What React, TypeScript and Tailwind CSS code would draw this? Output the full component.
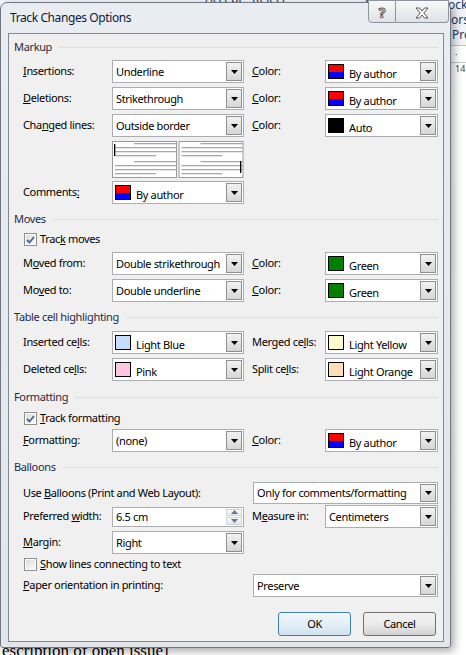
import React from 'react'

type SwatchKind = 'author' | 'black' | 'green' | 'lightblue' | 'pink' | 'lightyellow' | 'lightorange'

function Swatch({ kind }: { kind: SwatchKind }) {
  return (
    <div className="ml-[2px] mt-[3px] w-[16px] h-[15px] shrink-0 border border-black flex flex-col">
      {kind === 'author' && (
        <>
          <div className="flex-1 bg-[#ff0000]" />
          <div className="flex-1 bg-[#0000ff]" />
        </>
      )}
      {kind === 'black' && <div className="flex-1 bg-black" />}
      {kind === 'green' && <div className="flex-1 bg-[#008000]" />}
      {kind === 'lightblue' && <div className="flex-1 bg-[#c4defb]" />}
      {kind === 'pink' && <div className="flex-1 bg-[#ffc4e2]" />}
      {kind === 'lightyellow' && <div className="flex-1 bg-[#f9f9cc]" />}
      {kind === 'lightorange' && <div className="flex-1 bg-[#ffdcb8]" />}
    </div>
  )
}

function Arrow() {
  return (
    <div className="w-[16px] shrink-0 my-[1px] mr-[1px] flex items-center justify-center border border-[#8e8f8f] bg-gradient-to-b from-[#f2f2f2] to-[#d6d6d6]">
      <svg width="7" height="4" viewBox="0 0 7 4">
        <path d="M0 0h7L3.5 4z" fill="#000" />
      </svg>
    </div>
  )
}

function Combo({ className, text, swatch }: { className: string; text: string; swatch?: SwatchKind }) {
  return (
    <div className={`flex bg-white border border-[#abadb3] ${className}`}>
      {swatch ? (
        <div className="flex flex-1 items-start min-w-0">
          <Swatch kind={swatch} />
          <span className="ml-[5px] mt-[6px] leading-[14px] whitespace-nowrap">{text}</span>
        </div>
      ) : (
        <span className="flex-1 self-center pl-[3px] leading-[16px] whitespace-nowrap">{text}</span>
      )}
      <Arrow />
    </div>
  )
}

function Spinner() {
  return (
    <div className="flex h-[20px] w-[132px] bg-white border border-[#abadb3]">
      <span className="flex-1 self-center pl-[3px] leading-[16px]">6.5 cm</span>
      <div className="w-[16px] flex flex-col my-[1px] mr-[1px] gap-px">
        <div className="flex-1 flex items-center justify-center bg-gradient-to-b from-[#f6f7f9] to-[#e4e7ec] border border-[#d0d4da]">
          <svg width="7" height="4" viewBox="0 0 7 4">
            <path d="M0 4h7L3.5 0z" fill="#6a7690" />
          </svg>
        </div>
        <div className="flex-1 flex items-center justify-center bg-gradient-to-b from-[#f6f7f9] to-[#e4e7ec] border border-[#d0d4da]">
          <svg width="7" height="4" viewBox="0 0 7 4">
            <path d="M0 0h7L3.5 4z" fill="#6a7690" />
          </svg>
        </div>
      </div>
    </div>
  )
}

function Section({ title, className }: { title: string; className: string }) {
  return (
    <div className={`flex items-center h-[16px] pl-[5px] pr-[5px] ${className}`}>
      <span className="leading-[16px] text-[#1e2b45]">{title}</span>
      <div className="flex-1 h-px bg-[#d5dfe5] ml-[7px]" />
    </div>
  )
}

function Check({ checked }: { checked: boolean }) {
  return (
    <div className="w-[13px] h-[13px] shrink-0 border border-[#8e8f8f] bg-white p-px">
      <div className="w-full h-full bg-gradient-to-br from-[#dcdcdc] to-[#fbfbfb] flex items-center justify-center">
        {checked && (
          <svg width="9" height="8" viewBox="0 0 9 8">
            <path d="M1 4l2.5 2.5L8 1" stroke="#4a5f97" strokeWidth="1.8" fill="none" />
          </svg>
        )}
      </div>
    </div>
  )
}

function Preview() {
  const pane = (ox: number) => (
    <g>
      <rect x={ox + 0.5} y="0.5" width="64" height="36" fill="#fff" stroke="#9a9a9a" />
      {[2, 20].map(y => (
        <g key={y}>
          <rect x={ox + 22} y={y} width="42" height="1.3" fill="#a8a8a8" />
          <rect x={ox + 3} y={y + 4} width="61" height="1.3" fill="#a8a8a8" />
          <rect x={ox + 3} y={y + 8} width="61" height="1.3" fill="#a8a8a8" />
          <rect x={ox + 3} y={y + 12} width="41" height="1.3" fill="#a8a8a8" />
        </g>
      ))}
    </g>
  )
  return (
    <svg width="132" height="37" viewBox="0 0 132 37" className="block">
      {pane(0)}
      {pane(66.5)}
      <rect x="2" y="3" width="1.3" height="12" fill="#000" />
      <rect x="128" y="20" width="1.3" height="12" fill="#000" />
    </svg>
  )
}

function Label({ children }: { children: React.ReactNode }) {
  return <span className="w-[89px] shrink-0 whitespace-nowrap">{children}</span>
}

function RightLabel({ children }: { children: React.ReactNode }) {
  return <span className="ml-[8px] w-[73px] shrink-0 whitespace-nowrap">{children}</span>
}

function Btn({ children, primary }: { children: React.ReactNode; primary?: boolean }) {
  return (
    <div
      className={`w-[73px] h-[24px] rounded-[3px] border flex items-center justify-center ${
        primary
          ? 'border-[#3c7fb1] bg-gradient-to-b from-[#f1f7fb] via-[#e4eff7] to-[#cfe2ef]'
          : 'border-[#707070] bg-gradient-to-b from-[#f2f2f2] via-[#ebebeb] to-[#d2d2d2]'
      }`}
    >
      {children}
    </div>
  )
}

export default function App() {
  return (
    <div className="relative w-[466px] h-[655px] overflow-hidden bg-white font-['Noto_Sans',sans-serif]">
      {/* Word window behind */}
      <div className="absolute left-0 top-0 w-full h-[46px] bg-[#f1f4f8] border-b border-[#b9c6d6] text-[12px] leading-[14px] text-[#1e395b]">
        <span className="absolute left-[205px] top-[-8px]">Accept</span>
        <span className="absolute left-[252px] top-[-8px]">Reject</span>
        <span className="absolute left-[365px] top-[-8px]">Compare</span>
        <span className="absolute left-[437px] top-[-2px]">Block</span>
        <span className="absolute left-[451px] top-[13px]">ors</span>
        <span className="absolute left-[452px] top-[28px]">Pro</span>
      </div>
      <div className="absolute left-0 top-[47px] w-full h-[16px] bg-white border-b border-[#c8c8c8] text-[9px] text-[#444]">
        <span className="absolute left-[455px] top-[1px]">· 14</span>
      </div>
      <div className="absolute left-[2px] top-[642px] text-[17px] leading-[17px] font-['Liberation_Serif',serif] text-black">
        escription of open issue]
      </div>

      {/* Dialog */}
      <div className="absolute left-0 top-[2px] w-[451px] h-[646px] flex flex-col rounded-t-[7px] rounded-b-[3px] border border-[#707680] bg-gradient-to-b from-[#e9edf2] to-[#e2e6ea] shadow-[3px_3px_8px_rgba(0,0,0,0.35)] text-[11px] tracking-[-0.35px] text-black">
        <div className="h-[30px] flex items-start shrink-0">
          <span className="pl-[9px] pt-[7px] text-[12px] leading-[16px] tracking-[-0.4px] text-[#0e1a3a]">Track Changes Options</span>
          <div className="ml-auto mr-[1px] mt-[-3px] flex">
            <div className="w-[28px] h-[23px] rounded-bl-[4px] border border-[#8d939b] bg-gradient-to-b from-[#f7f8f9] to-[#dfe2e6] flex items-center justify-center pt-[2px] text-[14px] font-bold leading-none text-white [-webkit-text-stroke:1px_#555]">
              ?
            </div>
            <div className="w-[53px] h-[23px] rounded-br-[4px] border border-l-0 border-[#8d939b] bg-gradient-to-b from-[#f7f8f9] to-[#dfe2e6] flex items-center justify-center pt-[2px]">
              <svg width="14" height="12" viewBox="0 0 14 12">
                <path
                  d="M1 1h3.5L7 4l2.5-3H13L8.8 6 13 11H9.5L7 8l-2.5 3H1l4.2-5z"
                  fill="#fff"
                  stroke="#555"
                  strokeWidth="1"
                  strokeLinejoin="round"
                />
              </svg>
            </div>
          </div>
        </div>

        <div className="ml-[7px] mr-[6px] mb-[5px] flex-1 flex flex-col border border-[#7f8a95] bg-[#f0f0f0]">
          <Section title="Markup" className="mt-[5px]" />
          <div className="mt-[5px] flex items-center h-[23px] pl-[14px] pr-[5px]">
            <Label><u>I</u>nsertions:</Label>
            <Combo className="w-[132px] h-[23px]" text="Underline" />
            <RightLabel><u>C</u>olor:</RightLabel>
            <Combo className="w-[113px] h-[23px]" text="By author" swatch="author" />
          </div>
          <div className="mt-[4px] flex items-center h-[23px] pl-[14px] pr-[5px]">
            <Label><u>D</u>eletions:</Label>
            <Combo className="w-[132px] h-[23px]" text="Strikethrough" />
            <RightLabel><u>C</u>olor:</RightLabel>
            <Combo className="w-[113px] h-[23px]" text="By author" swatch="author" />
          </div>
          <div className="mt-[4px] flex items-center h-[23px] pl-[14px] pr-[5px]">
            <Label>Cha<u>n</u>ged lines:</Label>
            <Combo className="w-[132px] h-[23px]" text="Outside border" />
            <RightLabel><u>C</u>olor:</RightLabel>
            <Combo className="w-[113px] h-[23px]" text="Auto" swatch="black" />
          </div>
          <div className="mt-[4px] flex pl-[103px]">
            <Preview />
          </div>
          <div className="mt-[3px] flex items-center h-[23px] pl-[14px] pr-[5px]">
            <Label>Comments<u>:</u></Label>
            <Combo className="w-[132px] h-[23px]" text="By author" swatch="author" />
          </div>

          <Section title="Moves" className="mt-[7px]" />
          <div className="mt-[5px] flex items-center h-[15px] pl-[15px] gap-[3px]">
            <Check checked />
            <span>Trac<u>k</u> moves</span>
          </div>
          <div className="mt-[5px] flex items-center h-[23px] pl-[14px] pr-[5px]">
            <Label>M<u>o</u>ved from:</Label>
            <Combo className="w-[132px] h-[23px]" text="Double strikethrough" />
            <RightLabel><u>C</u>olor:</RightLabel>
            <Combo className="w-[113px] h-[23px]" text="Green" swatch="green" />
          </div>
          <div className="mt-[4px] flex items-center h-[23px] pl-[14px] pr-[5px]">
            <Label>Mo<u>v</u>ed to:</Label>
            <Combo className="w-[132px] h-[23px]" text="Double underline" />
            <RightLabel><u>C</u>olor:</RightLabel>
            <Combo className="w-[113px] h-[23px]" text="Green" swatch="green" />
          </div>

          <Section title="Table cell highlighting" className="mt-[7px]" />
          <div className="mt-[6px] flex items-center h-[23px] pl-[14px] pr-[5px]">
            <Label>Inserted ce<u>l</u>ls:</Label>
            <Combo className="w-[132px] h-[23px]" text="Light Blue" swatch="lightblue" />
            <RightLabel>Merged ce<u>l</u>ls:</RightLabel>
            <Combo className="w-[113px] h-[23px]" text="Light Yellow" swatch="lightyellow" />
          </div>
          <div className="mt-[4px] flex items-center h-[23px] pl-[14px] pr-[5px]">
            <Label>Deleted ce<u>l</u>ls:</Label>
            <Combo className="w-[132px] h-[23px]" text="Pink" swatch="pink" />
            <RightLabel>Split ce<u>l</u>ls:</RightLabel>
            <Combo className="w-[113px] h-[23px]" text="Light Orange" swatch="lightorange" />
          </div>

          <Section title="Formatting" className="mt-[8px]" />
          <div className="mt-[6px] flex items-center h-[15px] pl-[15px] gap-[3px]">
            <Check checked />
            <span><u>T</u>rack formatting</span>
          </div>
          <div className="mt-[3px] flex items-center h-[23px] pl-[14px] pr-[5px]">
            <Label><u>F</u>ormatting:</Label>
            <Combo className="w-[132px] h-[23px]" text="(none)" />
            <RightLabel><u>C</u>olor:</RightLabel>
            <Combo className="w-[113px] h-[23px]" text="By author" swatch="author" />
          </div>

          <Section title="Balloons" className="mt-[7px]" />
          <div className="mt-[7px] flex items-center h-[22px] pl-[14px] pr-[5px]">
            <span className="whitespace-nowrap">Use <u>B</u>alloons (Print and Web Layout):</span>
            <Combo className="ml-auto w-[185px] h-[22px]" text="Only for comments/formatting" />
          </div>
          <div className="mt-[1px] flex items-center h-[23px] pl-[14px] pr-[5px]">
            <Label>Preferred <u>w</u>idth:</Label>
            <Spinner />
            <RightLabel>M<u>e</u>asure in:</RightLabel>
            <Combo className="w-[113px] h-[23px]" text="Centimeters" />
          </div>
          <div className="mt-[3px] flex items-center h-[23px] pl-[14px] pr-[5px]">
            <Label><u>M</u>argin:</Label>
            <Combo className="w-[132px] h-[23px]" text="Right" />
          </div>
          <div className="mt-[3px] flex items-center h-[15px] pl-[15px] gap-[3px]">
            <Check checked={false} />
            <span><u>S</u>how lines connecting to text</span>
          </div>
          <div className="mt-[2px] flex items-center h-[23px] pl-[14px] pr-[5px]">
            <span className="whitespace-nowrap"><u>P</u>aper orientation in printing:</span>
            <Combo className="ml-auto w-[185px] h-[23px]" text="Preserve" />
          </div>

          <div className="mt-[15px] flex justify-end gap-[12px] pr-[7px]">
            <Btn primary>OK</Btn>
            <Btn>Cancel</Btn>
          </div>
        </div>
      </div>
    </div>
  )
}
